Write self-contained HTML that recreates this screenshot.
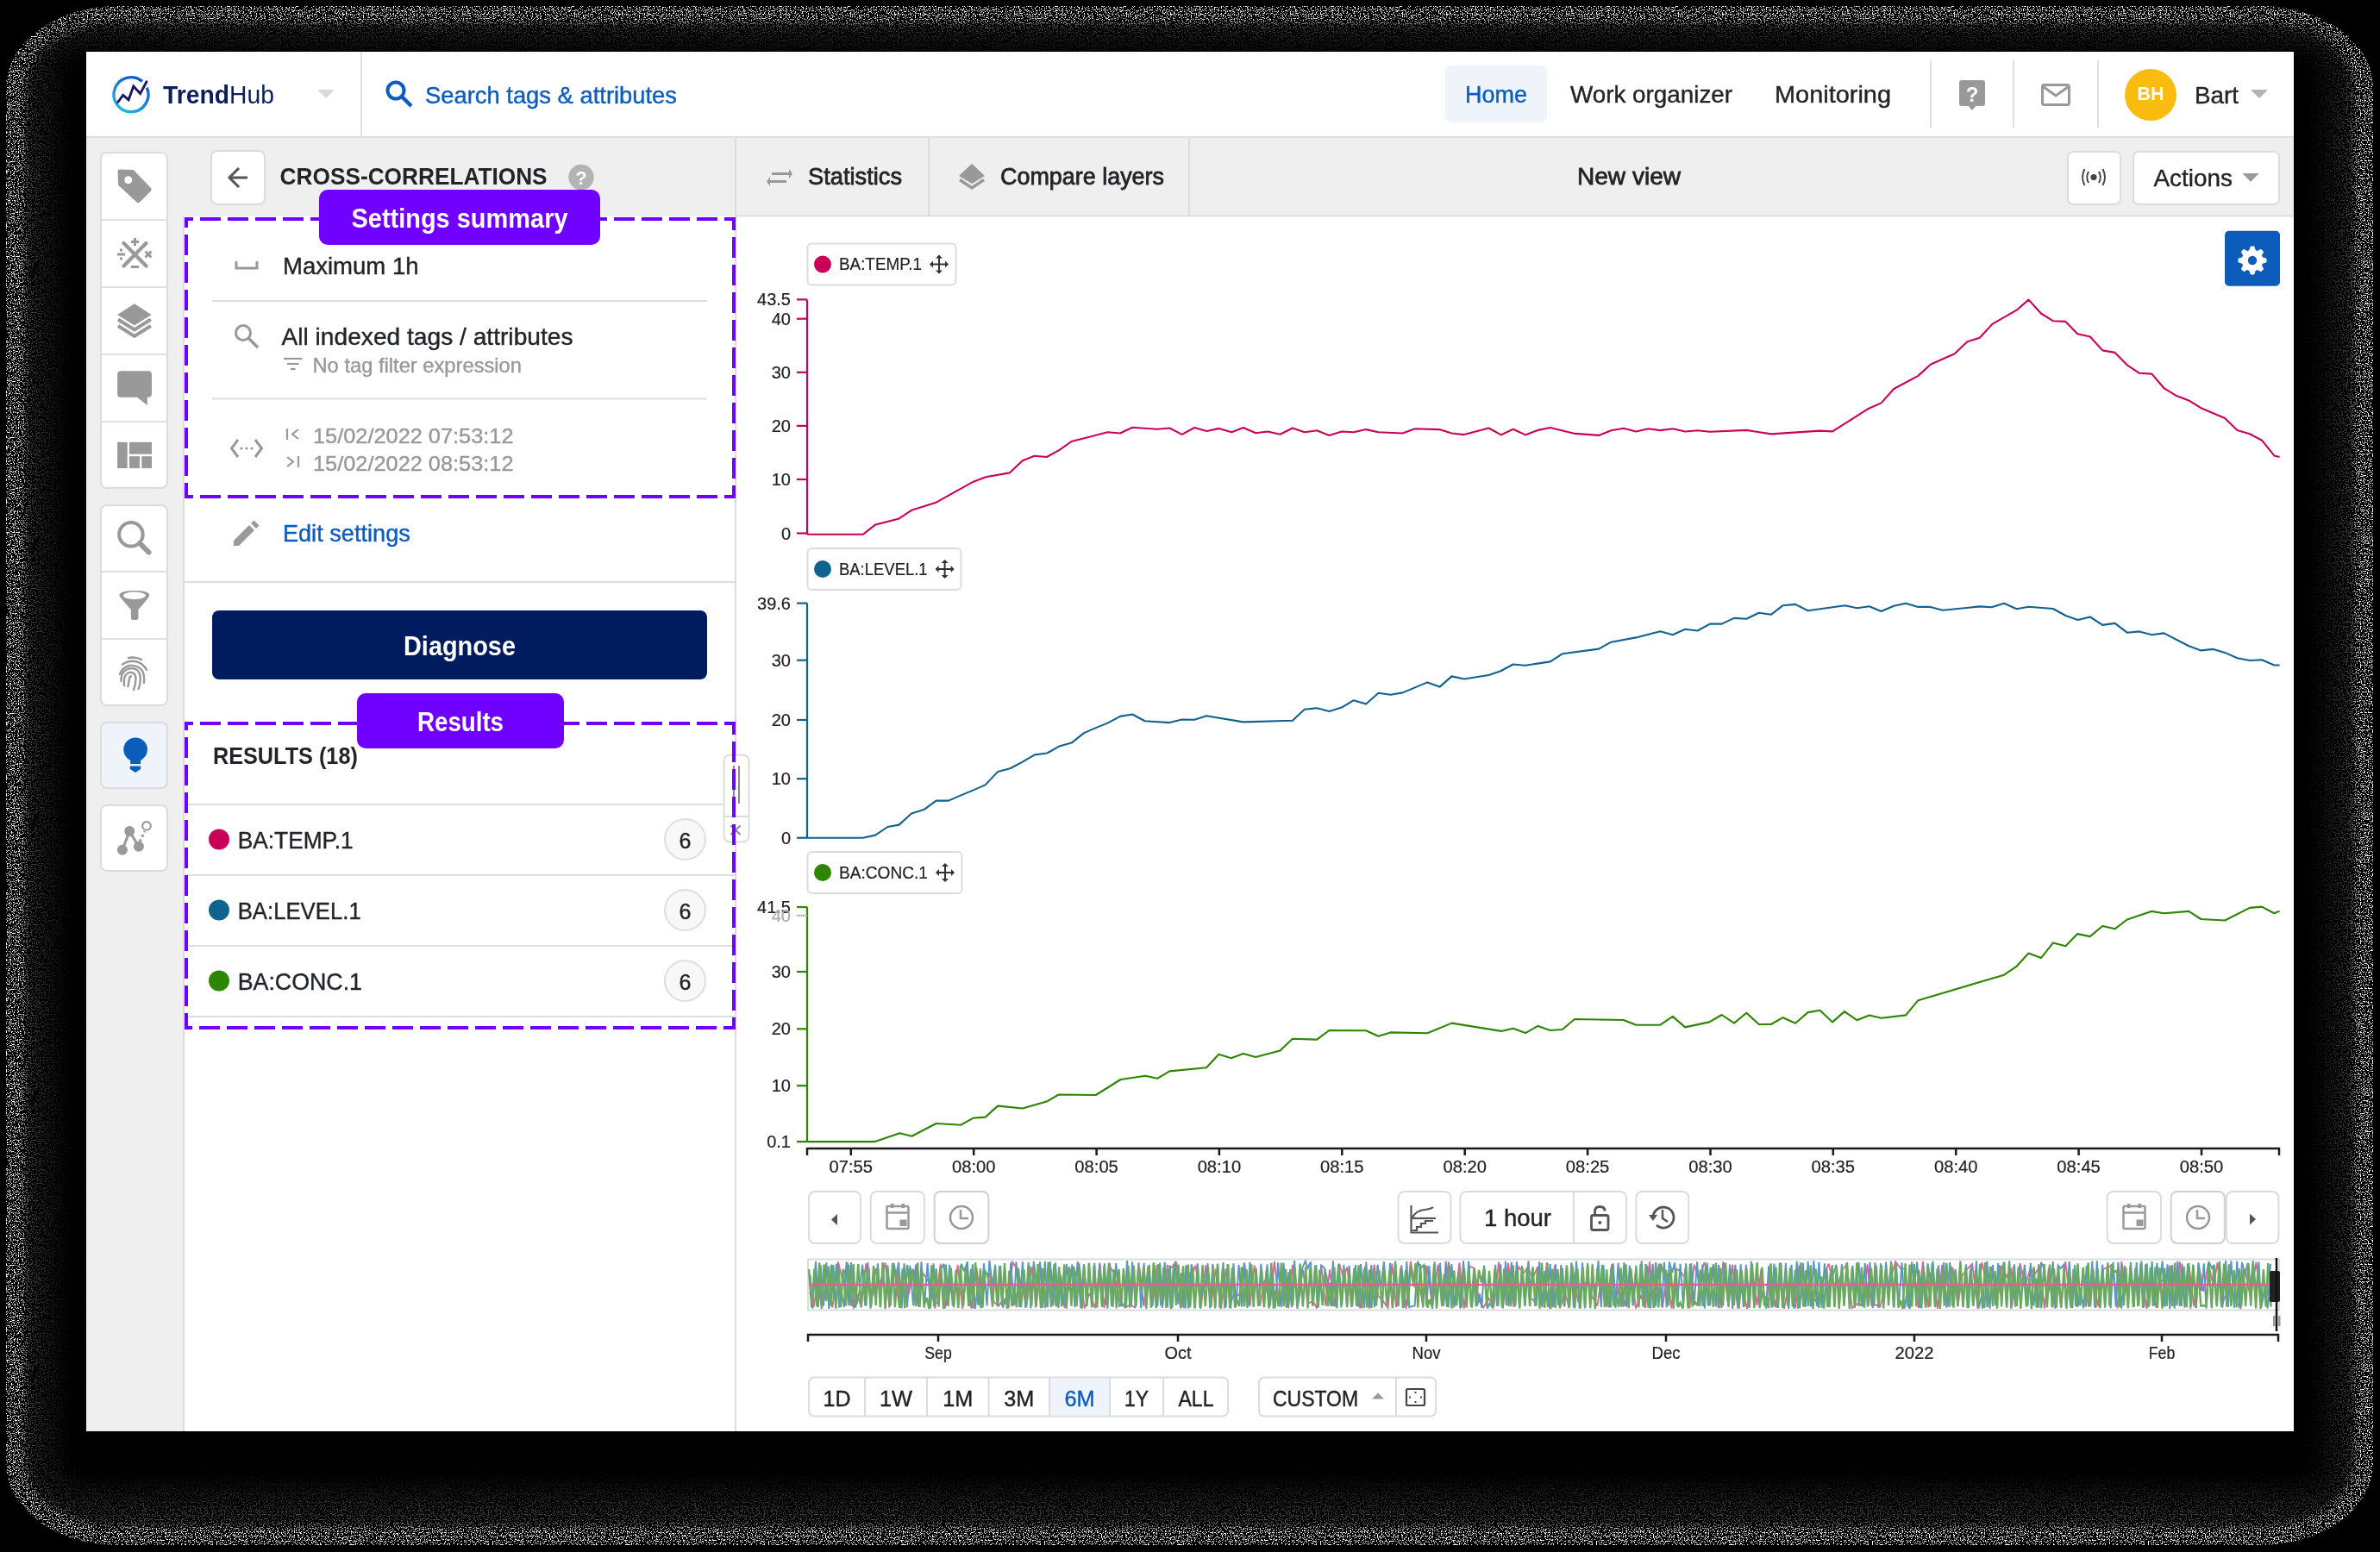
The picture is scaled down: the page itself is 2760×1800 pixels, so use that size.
<!DOCTYPE html>
<html><head><meta charset="utf-8"><title>TrendHub</title>
<style>
html,body{margin:0;padding:0;background:#000;width:2760px;height:1800px;overflow:hidden;}
svg{display:block;font-family:"Liberation Sans", sans-serif;will-change:transform;}
</style></head><body>
<svg width="2760" height="1800" viewBox="0 0 2760 1800">
<rect x="0" y="0" width="2760" height="1800" fill="#000"/>
<defs><filter id="dither" x="0" y="0" width="2760" height="1800" filterUnits="userSpaceOnUse" color-interpolation-filters="sRGB"><feTurbulence type="fractalNoise" baseFrequency="0.8" numOctaves="1" seed="11" result="t"/><feColorMatrix in="t" type="matrix" values="0 0 0 0 0  0 0 0 0 0  0 0 0 0 0  16 0 0 0 -8.8" result="m"/><feComponentTransfer in="SourceGraphic" result="b"><feFuncR type="linear" slope="2.8"/><feFuncG type="linear" slope="2.8"/><feFuncB type="linear" slope="2.8"/></feComponentTransfer><feComposite in="b" in2="m" operator="in" result="c"/><feFlood flood-color="#000" result="k"/><feComposite in="c" in2="k" operator="over"/></filter><filter id="sblur" x="-10%" y="-10%" width="120%" height="120%"><feGaussianBlur stdDeviation="22"/></filter><filter id="sblur2" x="-10%" y="-10%" width="120%" height="120%"><feGaussianBlur stdDeviation="5"/></filter></defs>
<g filter="url(#dither)">
<rect x="0" y="0" width="2760" height="1800" fill="#000"/>
<rect x="7" y="7" width="2745" height="1785" rx="130" ry="95" fill="#6e6e6e"/>
<rect x="28" y="27" width="2703" height="1745" rx="112" ry="78" fill="#202020" filter="url(#sblur2)"/>
<rect x="50" y="40" width="2660" height="1700" rx="20" fill="#000" filter="url(#sblur)"/>
</g>
<rect x="100" y="60" width="2560" height="1600" fill="#efefef"/>
<rect x="100" y="60" width="2560" height="98" fill="#ffffff"/>
<rect x="100" y="158" width="2560" height="2" fill="#dedede"/>
<rect x="418" y="60" width="2" height="98" fill="#e2e2e2"/>
<defs><linearGradient id="logoG" x1="0.8" y1="0" x2="0.2" y2="1"><stop offset="0" stop-color="#0a55c0"/><stop offset="1" stop-color="#27b6e6"/></linearGradient></defs>
<path d="M170.3,101.6 A20,20 0 1 1 164.9,94.4" fill="none" stroke="url(#logoG)" stroke-width="3.4"/>
<polyline points="136.7,118.5 142.7,110.4 149.1,115.7 154.8,100.1 162.6,108.6 170,94.8" fill="none" stroke="#1c1a5e" stroke-width="2.9" stroke-linejoin="miter" stroke-linecap="round"/>
<text x="189" y="120" font-size="29" font-weight="normal" fill="#0b1f5e" text-anchor="start" textLength="129" lengthAdjust="spacingAndGlyphs" ><tspan font-weight="bold">Trend</tspan>Hub</text>
<polygon points="368,104 388,104 378,114" fill="#d9d9d9"/>
<circle cx="459" cy="105" r="9.5" fill="none" stroke="#0c5cc0" stroke-width="4"/>
<line x1="466" y1="112" x2="477" y2="123" stroke="#0c5cc0" stroke-width="4.5" stroke-linecap="butt"/>
<text x="493" y="119.7" font-size="28" font-weight="normal" fill="#0c5cc0" text-anchor="start" textLength="292" lengthAdjust="spacingAndGlyphs"  stroke="#0c5cc0" stroke-width="0.4">Search tags &amp; attributes</text>
<rect x="1676" y="76" width="118" height="66" rx="8" fill="#eef4fa"/>
<text x="1699" y="118.5" font-size="28" font-weight="normal" fill="#0c5cc0" text-anchor="start" textLength="72" lengthAdjust="spacingAndGlyphs"  stroke="#0c5cc0" stroke-width="0.4">Home</text>
<text x="1821" y="118.5" font-size="28" font-weight="normal" fill="#212529" text-anchor="start" textLength="188" lengthAdjust="spacingAndGlyphs"  stroke="#212529" stroke-width="0.4">Work organizer</text>
<text x="2058" y="118.5" font-size="28" font-weight="normal" fill="#212529" text-anchor="start" textLength="135" lengthAdjust="spacingAndGlyphs"  stroke="#212529" stroke-width="0.4">Monitoring</text>
<rect x="2238" y="70" width="2" height="78" fill="#dedede"/>
<rect x="2334" y="70" width="2" height="78" fill="#dedede"/>
<rect x="2432" y="70" width="2" height="78" fill="#dedede"/>
<rect x="2272" y="93" width="30" height="30" rx="3" fill="#999"/>
<polygon points="2282,122 2292,122 2287,128" fill="#999"/>
<text x="2287" y="118" font-size="24" font-weight="bold" fill="#fff" text-anchor="middle">?</text>
<rect x="2368.5" y="98.5" width="31" height="23" rx="2" fill="none" stroke="#999" stroke-width="3"/>
<polyline points="2370,101 2384,111 2398,101" fill="none" stroke="#999" stroke-width="3"/>
<circle cx="2494" cy="110" r="30" fill="#fbbc10"/>
<text x="2494" y="115.6" font-size="22" font-weight="bold" fill="#fff" text-anchor="middle" textLength="31" lengthAdjust="spacingAndGlyphs" >BH</text>
<text x="2545" y="119.6" font-size="28" font-weight="normal" fill="#212529" text-anchor="start" textLength="51" lengthAdjust="spacingAndGlyphs"  stroke="#212529" stroke-width="0.4">Bart</text>
<polygon points="2610,104 2630,104 2620,114" fill="#b3b3b3"/>
<rect x="117" y="177" width="77" height="389" rx="7" fill="#fff" stroke="#dcdcdc" stroke-width="2"/>
<rect x="118" y="254" width="75" height="2" fill="#e0e0e0"/>
<rect x="118" y="332" width="75" height="2" fill="#e0e0e0"/>
<rect x="118" y="410" width="75" height="2" fill="#e0e0e0"/>
<rect x="118" y="488" width="75" height="2" fill="#e0e0e0"/>
<rect x="117" y="586" width="77" height="232" rx="7" fill="#fff" stroke="#dcdcdc" stroke-width="2"/>
<rect x="118" y="662" width="75" height="2" fill="#e0e0e0"/>
<rect x="118" y="740" width="75" height="2" fill="#e0e0e0"/>
<rect x="117" y="838" width="77" height="76" rx="7" fill="#eef4fa" stroke="#dcdcdc" stroke-width="2"/>
<rect x="117" y="934" width="77" height="76" rx="7" fill="#fff" stroke="#dcdcdc" stroke-width="2"/>
<path d="M136.6,199 Q136.5,196.6 139,196.6 L154.7,197.1 L175,218 Q176.5,219.8 175,221.5 L162,234.5 Q160.3,236 158.6,234.5 L137.1,214.7 Z" fill="#999999"/>
<circle cx="148.8" cy="208.8" r="4.5" fill="#fff"/>
<g stroke="#999999" stroke-width="4.2" stroke-linecap="round"><line x1="143.5" y1="282" x2="169.5" y2="308.5"/><line x1="169.5" y1="282" x2="143.5" y2="308.5"/></g>
<g stroke="#999999" stroke-width="3" fill="#999999"><line x1="152" y1="280.5" x2="161" y2="280.5"/><line x1="156.5" y1="276" x2="156.5" y2="285"/><line x1="152" y1="309.5" x2="161" y2="309.5"/><line x1="136" y1="295" x2="145" y2="295"/><line x1="168.5" y1="291.5" x2="175.5" y2="298.5"/><line x1="175.5" y1="291.5" x2="168.5" y2="298.5"/></g>
<circle cx="140.5" cy="290" r="1.8" fill="#999999"/><circle cx="140.5" cy="300" r="1.8" fill="#999999"/>
<polygon points="155.9,352.3 175.6,365 155.9,377.6 136.1,365" fill="#999999"/>
<polyline points="137,370.5 155.9,382.5 174.8,370.5" fill="none" stroke="#999999" stroke-width="4"/>
<polyline points="137,378 155.9,390 174.8,378" fill="none" stroke="#999999" stroke-width="4"/>
<rect x="136.1" y="430.2" width="39.9" height="30.5" rx="4" fill="#999999"/><polygon points="157.8,460 170.9,470 170.9,460" fill="#999999"/>
<rect x="136.1" y="512.8" width="11.6" height="30.3" fill="#999999"/><rect x="150" y="512.8" width="26" height="13.9" fill="#999999"/><rect x="150" y="529.2" width="12" height="13.9" fill="#999999"/><rect x="164.3" y="529.2" width="11.7" height="13.9" fill="#999999"/>
<circle cx="151.9" cy="619.8" r="13.8" fill="none" stroke="#999999" stroke-width="4"/><line x1="162" y1="630" x2="172.5" y2="640.5" stroke="#999999" stroke-width="6" stroke-linecap="round"/>
<path d="M138.4,690.7 Q138.4,685 155.9,685 Q173.4,685 173.4,690.7 Q172,694 160.4,707 L160.4,717 Q160.4,719 156,719 Q151.9,719 151.9,717 L151.9,707 Q140,694 138.4,690.7 Z" fill="#999999"/>
<ellipse cx="155.9" cy="690.7" rx="13" ry="4.2" fill="#fff"/>
<g fill="none" stroke="#999999" stroke-width="2.4" stroke-linecap="round"><path d="M148.5,796 Q149.5,790 150,787 Q150.5,784 152,784.5"/><path d="M144,795 Q143.5,788 145,784 Q148,779 153,780 Q158,781.5 157.5,788 Q157,795 155,800"/><path d="M140.5,790 Q140,781 146,777 Q153,773 159,777 Q164,782 162.5,791 Q162,796 160.5,799"/><path d="M139,782 Q142,774 150,772 Q160,771 165,778 Q168,784 167,792"/><path d="M142,770.5 Q149,766 157,767 Q166,769 170,777"/><path d="M149,763 Q157,761.5 164,765"/></g>
<circle cx="157.1" cy="869.3" r="13.8" fill="#0c5cbc"/><path d="M147,877 L151.2,882 L151.2,886 L163.1,886 L163.1,882 L167.3,877 Z" fill="#0c5cbc"/><path d="M150.8,888.5 L163.1,888.5 L163.1,892 L157,896 L150.8,892 Z" fill="#0c5cbc"/>
<g stroke="#999999" stroke-width="3"><line x1="150.2" y1="964.1" x2="141.9" y2="985.8"/><line x1="150.2" y1="964.1" x2="160.9" y2="981.7"/><line x1="162" y1="976" x2="168" y2="964" stroke-dasharray="3 3"/></g>
<circle cx="150.2" cy="964.1" r="6" fill="#999999"/><circle cx="141.9" cy="985.8" r="6" fill="#999999"/><circle cx="160.9" cy="981.7" r="6" fill="#999999"/><circle cx="170" cy="957.9" r="4.8" fill="none" stroke="#999999" stroke-width="2.2"/>
<rect x="213" y="251" width="640" height="1409" fill="#ffffff"/>
<rect x="212" y="250" width="2" height="1410" fill="#dcdcdc"/>
<rect x="852" y="160" width="2" height="1500" fill="#dcdcdc"/>
<rect x="245" y="175" width="62" height="62" rx="7" fill="#fff" stroke="#dcdcdc" stroke-width="2"/>
<g stroke="#555" stroke-width="3" fill="none"><line x1="266" y1="206" x2="287" y2="206"/><polyline points="277,195 266,206 277,217"/></g>
<text x="324.6" y="213.8" font-size="28" font-weight="bold" fill="#212529" text-anchor="start" textLength="310" lengthAdjust="spacingAndGlyphs" >CROSS-CORRELATIONS</text>
<circle cx="674" cy="205.5" r="14.7" fill="#b3b3b3"/>
<text x="674" y="214" font-size="22" font-weight="bold" fill="#fff" text-anchor="middle">?</text>
<g stroke="#999" stroke-width="3" fill="none"><polyline points="274,303 274,311 298,311 298,303"/></g>
<text x="328" y="317.8" font-size="28" font-weight="normal" fill="#212529" text-anchor="start" textLength="157.5" lengthAdjust="spacingAndGlyphs"  stroke="#212529" stroke-width="0.4">Maximum 1h</text>
<rect x="246" y="348" width="574" height="2" fill="#dedede"/>
<circle cx="282" cy="386" r="8.5" fill="none" stroke="#999" stroke-width="3"/><line x1="288" y1="392" x2="299" y2="403" stroke="#999" stroke-width="3.5"/>
<text x="326.5" y="399.6" font-size="28" font-weight="normal" fill="#212529" text-anchor="start" textLength="338" lengthAdjust="spacingAndGlyphs"  stroke="#212529" stroke-width="0.4">All indexed tags / attributes</text>
<g stroke="#999" stroke-width="2.2"><line x1="329" y1="416" x2="350.5" y2="416"/><line x1="333" y1="422" x2="346.5" y2="422"/><line x1="337" y1="428" x2="342.5" y2="428"/></g>
<text x="362.5" y="432" font-size="24" font-weight="normal" fill="#999" text-anchor="start" textLength="242.5" lengthAdjust="spacingAndGlyphs"  stroke="#999" stroke-width="0.4">No tag filter expression</text>
<rect x="246" y="461.5" width="574" height="2" fill="#dedede"/>
<g stroke="#999" stroke-width="3" fill="none"><polyline points="276,510 268.5,520 276,530"/><polyline points="296,510 303.5,520 296,530"/></g>
<g fill="#999"><circle cx="280" cy="520" r="1.6"/><circle cx="286" cy="520" r="1.6"/><circle cx="292" cy="520" r="1.6"/></g>
<g stroke="#999" stroke-width="2.2" fill="none"><line x1="333" y1="497" x2="333" y2="510"/><polyline points="346,498 339,503.5 346,509"/><line x1="346" y1="529" x2="346" y2="542"/><polyline points="333,530 340,535.5 333,541"/></g>
<text x="363" y="514" font-size="24" font-weight="normal" fill="#999" text-anchor="start" textLength="232.5" lengthAdjust="spacingAndGlyphs"  stroke="#999" stroke-width="0.4">15/02/2022 07:53:12</text>
<text x="363" y="546" font-size="24" font-weight="normal" fill="#999" text-anchor="start" textLength="232.5" lengthAdjust="spacingAndGlyphs"  stroke="#999" stroke-width="0.4">15/02/2022 08:53:12</text>
<path d="M271,627 L271,633 L277,633 L295,615 L289,609 Z" fill="#999"/><path d="M291,607 L294.5,603.5 L300.5,609.5 L297,613 Z" fill="#999"/>
<text x="327.9" y="628.2" font-size="28" font-weight="normal" fill="#0c5cc0" text-anchor="start" textLength="148" lengthAdjust="spacingAndGlyphs"  stroke="#0c5cc0" stroke-width="0.4">Edit settings</text>
<rect x="213" y="674" width="640" height="2" fill="#dedede"/>
<rect x="246" y="708" width="574" height="80" rx="8" fill="#001c5e"/>
<text x="533" y="760" font-size="32" font-weight="bold" fill="#fff" text-anchor="middle" textLength="130" lengthAdjust="spacingAndGlyphs" >Diagnose</text>
<text x="246.9" y="885.7" font-size="28" font-weight="bold" fill="#212529" text-anchor="start" textLength="168" lengthAdjust="spacingAndGlyphs" >RESULTS (18)</text>
<rect x="218" y="932" width="620" height="2" fill="#dedede"/>
<circle cx="254" cy="973.5" r="12" fill="#c8005a"/>
<text x="275.7" y="984" font-size="28" font-weight="normal" fill="#212529" text-anchor="start" textLength="134" lengthAdjust="spacingAndGlyphs"  stroke="#212529" stroke-width="0.4">BA:TEMP.1</text>
<circle cx="794.5" cy="973.5" r="23.5" fill="#f8f8f8" stroke="#dedede" stroke-width="2"/>
<text x="794.5" y="984.0" font-size="25" font-weight="normal" fill="#212529" text-anchor="middle"  stroke="#212529" stroke-width="0.4">6</text>
<circle cx="254" cy="1055.5" r="12" fill="#12628f"/>
<text x="275.7" y="1065.7" font-size="28" font-weight="normal" fill="#212529" text-anchor="start" textLength="143" lengthAdjust="spacingAndGlyphs"  stroke="#212529" stroke-width="0.4">BA:LEVEL.1</text>
<circle cx="794.5" cy="1055.5" r="23.5" fill="#f8f8f8" stroke="#dedede" stroke-width="2"/>
<text x="794.5" y="1066.0" font-size="25" font-weight="normal" fill="#212529" text-anchor="middle"  stroke="#212529" stroke-width="0.4">6</text>
<circle cx="254" cy="1137.5" r="12" fill="#2d8500"/>
<text x="275.7" y="1147.8" font-size="28" font-weight="normal" fill="#212529" text-anchor="start" textLength="144.3" lengthAdjust="spacingAndGlyphs"  stroke="#212529" stroke-width="0.4">BA:CONC.1</text>
<circle cx="794.5" cy="1137.5" r="23.5" fill="#f8f8f8" stroke="#dedede" stroke-width="2"/>
<text x="794.5" y="1148.0" font-size="25" font-weight="normal" fill="#212529" text-anchor="middle"  stroke="#212529" stroke-width="0.4">6</text>
<rect x="213" y="1014" width="640" height="2" fill="#dedede"/>
<rect x="213" y="1096" width="640" height="2" fill="#dedede"/>
<rect x="213" y="1178" width="640" height="2" fill="#dedede"/>
<rect x="854" y="249.5" width="1806" height="2" fill="#dcdcdc"/>
<rect x="854" y="251.5" width="1806" height="1408.5" fill="#fff"/>
<rect x="1076" y="160" width="2" height="90" fill="#dcdcdc"/>
<rect x="1378" y="160" width="2" height="90" fill="#dcdcdc"/>
<g fill="#999"><path d="M895,200 L915,200 L915,196 L919,201.5 L915,207 L915,203 L895,203 Z"/><path d="M912,209 L893,209 L893,205 L889,210.5 L893,216 L893,212 L912,212 Z"/></g>
<text x="937" y="213.7" font-size="28" font-weight="normal" fill="#212529" text-anchor="start" textLength="109" lengthAdjust="spacingAndGlyphs"  stroke="#212529" stroke-width="0.8">Statistics</text>
<polygon points="1127,189.7 1142,204 1127,213 1112,204" fill="#999"/><polyline points="1113,208.5 1127,218 1141,208.5" fill="none" stroke="#999" stroke-width="3.5"/>
<text x="1160" y="213.7" font-size="28" font-weight="normal" fill="#212529" text-anchor="start" textLength="190" lengthAdjust="spacingAndGlyphs"  stroke="#212529" stroke-width="0.8">Compare layers</text>
<text x="1829" y="214" font-size="28" font-weight="normal" fill="#212529" text-anchor="start" textLength="120" lengthAdjust="spacingAndGlyphs"  stroke="#212529" stroke-width="0.8">New view</text>
<rect x="2398" y="176" width="61" height="61" rx="6" fill="#fff" stroke="#dcdcdc" stroke-width="2"/>
<circle cx="2428" cy="205.5" r="3.6" fill="#444"/><g fill="none" stroke="#444" stroke-width="2"><path d="M2422,199 Q2418.5,205.5 2422,212"/><path d="M2434,199 Q2437.5,205.5 2434,212"/><path d="M2417.5,196 Q2412.5,205.5 2417.5,215"/><path d="M2438.5,196 Q2443.5,205.5 2438.5,215"/></g>
<rect x="2474" y="176" width="169" height="61" rx="6" fill="#fff" stroke="#dcdcdc" stroke-width="2"/>
<text x="2497.5" y="216" font-size="28" font-weight="normal" fill="#212529" text-anchor="start" textLength="91.5" lengthAdjust="spacingAndGlyphs"  stroke="#212529" stroke-width="0.4">Actions</text>
<polygon points="2600.5,201 2619.7,201 2610,211" fill="#999"/>
<rect x="2580" y="267.7" width="64" height="64" rx="5" fill="#0c5cbc"/>
<polygon points="2623.28,298.55 2628.09,300.08 2628.09,303.92 2623.28,305.45 2622.42,307.54 2624.73,312.01 2622.01,314.73 2617.54,312.42 2615.45,313.28 2613.92,318.09 2610.08,318.09 2608.55,313.28 2606.46,312.42 2601.99,314.73 2599.27,312.01 2601.58,307.54 2600.72,305.45 2595.91,303.92 2595.91,300.08 2600.72,298.55 2601.58,296.46 2599.27,291.99 2601.99,289.27 2606.46,291.58 2608.55,290.72 2610.08,285.91 2613.92,285.91 2615.45,290.72 2617.54,291.58 2622.01,289.27 2624.73,291.99 2622.42,296.46" fill="#fff" stroke="#fff" stroke-width="0.8" stroke-linejoin="round"/>
<circle cx="2612" cy="302" r="12.2" fill="#fff"/><circle cx="2612" cy="302" r="5.2" fill="#0c5cbc"/>
<rect x="839.5" y="875.5" width="29" height="101" rx="7" fill="#fff" stroke="#dcdcdc" stroke-width="2"/>
<rect x="840" y="946" width="28" height="2" fill="#dcdcdc"/>
<g stroke="#888" stroke-width="2"><line x1="851" y1="888" x2="851" y2="932"/><line x1="857" y1="888" x2="857" y2="932"/><line x1="847.5" y1="957.5" x2="858.5" y2="968"/><line x1="858.5" y1="957.5" x2="847.5" y2="968"/></g>
<rect x="216" y="254" width="635" height="322" fill="none" stroke="#7000ff" stroke-width="4" stroke-dasharray="24 8" stroke-dashoffset="-16"/>
<rect x="216" y="839" width="635" height="353" fill="none" stroke="#7000ff" stroke-width="4" stroke-dasharray="24 8" stroke-dashoffset="-16"/>
<rect x="370" y="220" width="326" height="64" rx="10" fill="#7000ff"/>
<text x="533" y="264.2" font-size="32" font-weight="bold" fill="#fff" text-anchor="middle" textLength="251" lengthAdjust="spacingAndGlyphs" >Settings summary</text>
<rect x="414" y="804" width="240" height="64" rx="10" fill="#7000ff"/>
<text x="534" y="847.7" font-size="32" font-weight="bold" fill="#fff" text-anchor="middle" textLength="100" lengthAdjust="spacingAndGlyphs" >Results</text>
<rect x="936.5" y="282.5" width="172" height="48" rx="5" fill="#fff" stroke="#dcdcdc" stroke-width="2"/>
<circle cx="954" cy="306.5" r="10" fill="#c8005a"/>
<text x="973" y="313.3" font-size="20" font-weight="normal" fill="#222" text-anchor="start" textLength="96" lengthAdjust="spacingAndGlyphs"  stroke="#222" stroke-width="0.2">BA:TEMP.1</text>
<g stroke="#333" stroke-width="2"><line x1="1079" y1="306.5" x2="1099" y2="306.5"/><line x1="1089" y1="296.5" x2="1089" y2="316.5"/></g>
<g fill="#333"><polygon points="1078,306.5 1082,302.5 1082,310.5"/><polygon points="1100,306.5 1096,302.5 1096,310.5"/><polygon points="1089,295.5 1085,299.5 1093,299.5"/><polygon points="1089,317.5 1085,313.5 1093,313.5"/></g>
<line x1="936" y1="347.4" x2="936" y2="619.8" stroke="#c8005a" stroke-width="2.2"/>
<line x1="924" y1="347.4" x2="936" y2="347.4" stroke="#c8005a" stroke-width="2.2"/>
<text x="917" y="354.4" font-size="20" font-weight="normal" fill="#222" text-anchor="end"  stroke="#222" stroke-width="0.2">43.5</text>
<line x1="924" y1="369.7" x2="936" y2="369.7" stroke="#c8005a" stroke-width="2.2"/>
<text x="917" y="376.7" font-size="20" font-weight="normal" fill="#222" text-anchor="end"  stroke="#222" stroke-width="0.2">40</text>
<line x1="924" y1="431.8" x2="936" y2="431.8" stroke="#c8005a" stroke-width="2.2"/>
<text x="917" y="438.8" font-size="20" font-weight="normal" fill="#222" text-anchor="end"  stroke="#222" stroke-width="0.2">30</text>
<line x1="924" y1="493.9" x2="936" y2="493.9" stroke="#c8005a" stroke-width="2.2"/>
<text x="917" y="500.9" font-size="20" font-weight="normal" fill="#222" text-anchor="end"  stroke="#222" stroke-width="0.2">20</text>
<line x1="924" y1="556" x2="936" y2="556" stroke="#c8005a" stroke-width="2.2"/>
<text x="917" y="563" font-size="20" font-weight="normal" fill="#222" text-anchor="end"  stroke="#222" stroke-width="0.2">10</text>
<line x1="924" y1="618.5" x2="936" y2="618.5" stroke="#c8005a" stroke-width="2.2"/>
<text x="917" y="625.5" font-size="20" font-weight="normal" fill="#222" text-anchor="end"  stroke="#222" stroke-width="0.2">0</text>
<polyline points="936.0,619.8 1000.7,619.8 1015.0,608.6 1042.6,601.4 1057.0,591.8 1085.7,582.7 1128.8,558.7 1143.2,553.2 1170.7,548.4 1185.8,534.3 1199.5,528.8 1213.8,530.0 1228.2,522.1 1242.6,512.0 1284.5,501.3 1298.9,502.5 1313.2,495.7 1342.0,497.7 1356.3,496.5 1370.7,503.9 1385.1,496.0 1399.5,500.0 1413.8,496.9 1428.2,501.3 1441.8,496.0 1456.2,502.2 1470.1,500.5 1484.5,503.7 1498.9,496.5 1512.8,501.3 1527.1,499.3 1541.5,504.9 1555.9,500.5 1569.8,501.3 1584.1,498.1 1598.5,501.3 1626.5,502.5 1640.9,497.2 1669.2,498.1 1683.5,502.5 1697.9,504.1 1726.4,496.5 1740.8,504.4 1754.7,497.7 1769.0,504.4 1783.4,498.9 1797.8,496.0 1826.5,502.9 1854.0,504.9 1868.4,499.3 1882.8,496.7 1897.2,500.5 1911.6,497.2 1925.4,499.1 1939.8,497.2 1954.2,500.5 1968.6,499.3 1982.9,500.8 2025.3,498.9 2053.8,503.4 2110.5,499.6 2125.1,500.4 2167.2,473.7 2181.6,467.4 2196.2,451.0 2224.4,435.9 2239.1,422.5 2266.8,410.2 2281.4,396.3 2295.8,391.8 2310.4,375.9 2338.6,359.7 2352.5,347.6 2366.9,363.5 2381.0,372.3 2395.4,372.9 2409.2,387.2 2423.8,390.5 2438.2,406.4 2452.6,408.9 2466.7,423.3 2481.0,432.8 2495.4,433.6 2509.5,450.2 2523.9,459.1 2538.3,464.4 2552.4,473.2 2580.1,485.0 2594.5,498.9 2608.9,503.2 2623.0,510.7 2637.3,528.4 2643.6,529.9" fill="none" stroke="#c8005a" stroke-width="2.1" stroke-linejoin="round"/>
<rect x="936.5" y="636.0" width="178" height="48" rx="5" fill="#fff" stroke="#dcdcdc" stroke-width="2"/>
<circle cx="954" cy="660.0" r="10" fill="#12628f"/>
<text x="973" y="666.8" font-size="20" font-weight="normal" fill="#222" text-anchor="start" textLength="102.6" lengthAdjust="spacingAndGlyphs"  stroke="#222" stroke-width="0.2">BA:LEVEL.1</text>
<g stroke="#333" stroke-width="2"><line x1="1085.6" y1="660.0" x2="1105.6" y2="660.0"/><line x1="1095.6" y1="650.0" x2="1095.6" y2="670.0"/></g>
<g fill="#333"><polygon points="1084.6,660.0 1088.6,656.0 1088.6,664.0"/><polygon points="1106.6,660.0 1102.6,656.0 1102.6,664.0"/><polygon points="1095.6,649.0 1091.6,653.0 1099.6,653.0"/><polygon points="1095.6,671.0 1091.6,667.0 1099.6,667.0"/></g>
<line x1="936" y1="699.6" x2="936" y2="971.7" stroke="#12628f" stroke-width="2.2"/>
<line x1="924" y1="699.6" x2="936" y2="699.6" stroke="#12628f" stroke-width="2.2"/>
<text x="917" y="706.6" font-size="20" font-weight="normal" fill="#222" text-anchor="end"  stroke="#222" stroke-width="0.2">39.6</text>
<line x1="924" y1="765.7" x2="936" y2="765.7" stroke="#12628f" stroke-width="2.2"/>
<text x="917" y="772.7" font-size="20" font-weight="normal" fill="#222" text-anchor="end"  stroke="#222" stroke-width="0.2">30</text>
<line x1="924" y1="835" x2="936" y2="835" stroke="#12628f" stroke-width="2.2"/>
<text x="917" y="842" font-size="20" font-weight="normal" fill="#222" text-anchor="end"  stroke="#222" stroke-width="0.2">20</text>
<line x1="924" y1="903.2" x2="936" y2="903.2" stroke="#12628f" stroke-width="2.2"/>
<text x="917" y="910.2" font-size="20" font-weight="normal" fill="#222" text-anchor="end"  stroke="#222" stroke-width="0.2">10</text>
<line x1="924" y1="971.7" x2="936" y2="971.7" stroke="#12628f" stroke-width="2.2"/>
<text x="917" y="978.7" font-size="20" font-weight="normal" fill="#222" text-anchor="end"  stroke="#222" stroke-width="0.2">0</text>
<polyline points="936.0,971.7 1000.7,971.7 1015.0,968.6 1029.4,959.0 1042.6,956.6 1057.0,943.5 1072.0,938.7 1085.7,928.6 1100.0,928.6 1114.4,922.4 1128.8,916.4 1142.5,910.4 1157.1,895.1 1171.4,891.3 1185.8,883.6 1199.9,875.4 1214.3,873.5 1228.2,865.6 1242.6,861.6 1257.0,850.1 1270.8,844.1 1284.5,838.6 1298.9,830.9 1313.2,828.5 1327.6,836.2 1356.3,838.1 1370.7,834.5 1385.1,834.7 1399.0,830.2 1441.8,837.4 1498.9,835.7 1512.8,822.8 1527.1,821.3 1541.5,824.9 1555.9,820.6 1569.8,812.2 1584.1,816.5 1598.5,803.8 1612.6,805.7 1626.5,803.4 1655.3,791.4 1669.6,796.6 1683.5,784.4 1697.9,787.5 1726.4,783.0 1740.3,778.2 1754.7,770.5 1769.0,771.7 1797.8,767.4 1811.7,758.3 1854.0,752.6 1868.4,744.7 1897.2,739.4 1925.4,732.2 1939.8,736.3 1954.2,729.8 1968.6,731.5 1982.9,723.6 1996.6,723.6 2011.0,716.9 2025.3,717.8 2039.7,710.7 2053.8,712.8 2067.6,702.2 2082.0,700.9 2096.6,708.2 2139.5,702.2 2153.4,705.2 2167.7,703.2 2181.6,709.0 2196.2,702.7 2210.1,699.7 2224.4,703.9 2238.6,703.9 2252.9,707.7 2295.8,703.4 2309.6,704.2 2324.0,699.7 2338.6,706.2 2352.5,703.7 2381.0,706.0 2395.4,714.0 2409.7,719.0 2423.8,715.5 2438.2,724.9 2452.6,722.9 2466.7,733.7 2481.0,732.4 2495.4,736.2 2509.5,734.4 2538.3,749.3 2552.4,754.4 2566.8,752.9 2580.1,756.9 2594.5,763.2 2608.9,766.0 2623.0,765.2 2637.3,771.5 2643.6,771.5" fill="none" stroke="#12628f" stroke-width="2.1" stroke-linejoin="round"/>
<rect x="936.5" y="988.0" width="179" height="48" rx="5" fill="#fff" stroke="#dcdcdc" stroke-width="2"/>
<circle cx="954" cy="1012.0" r="10" fill="#2d8500"/>
<text x="973" y="1018.8" font-size="20" font-weight="normal" fill="#222" text-anchor="start" textLength="103" lengthAdjust="spacingAndGlyphs"  stroke="#222" stroke-width="0.2">BA:CONC.1</text>
<g stroke="#333" stroke-width="2"><line x1="1086" y1="1012.0" x2="1106" y2="1012.0"/><line x1="1096" y1="1002.0" x2="1096" y2="1022.0"/></g>
<g fill="#333"><polygon points="1085,1012.0 1089,1008.0 1089,1016.0"/><polygon points="1107,1012.0 1103,1008.0 1103,1016.0"/><polygon points="1096,1001.0 1092,1005.0 1100,1005.0"/><polygon points="1096,1023.0 1092,1019.0 1100,1019.0"/></g>
<line x1="936" y1="1052" x2="936" y2="1324.1" stroke="#2d8500" stroke-width="2.2"/>
<line x1="924" y1="1052" x2="936" y2="1052" stroke="#2d8500" stroke-width="2.2"/>
<text x="917" y="1059" font-size="20" font-weight="normal" fill="#222" text-anchor="end"  stroke="#222" stroke-width="0.2">41.5</text>
<line x1="924" y1="1127" x2="936" y2="1127" stroke="#2d8500" stroke-width="2.2"/>
<text x="917" y="1134" font-size="20" font-weight="normal" fill="#222" text-anchor="end"  stroke="#222" stroke-width="0.2">30</text>
<line x1="924" y1="1193.3" x2="936" y2="1193.3" stroke="#2d8500" stroke-width="2.2"/>
<text x="917" y="1200.3" font-size="20" font-weight="normal" fill="#222" text-anchor="end"  stroke="#222" stroke-width="0.2">20</text>
<line x1="924" y1="1259.2" x2="936" y2="1259.2" stroke="#2d8500" stroke-width="2.2"/>
<text x="917" y="1266.2" font-size="20" font-weight="normal" fill="#222" text-anchor="end"  stroke="#222" stroke-width="0.2">10</text>
<line x1="924" y1="1324.1" x2="936" y2="1324.1" stroke="#2d8500" stroke-width="2.2"/>
<text x="917" y="1331.1" font-size="20" font-weight="normal" fill="#222" text-anchor="end"  stroke="#222" stroke-width="0.2">0.1</text>
<line x1="924" y1="1061.8" x2="936" y2="1061.8" stroke="#a8d29a" stroke-width="2.2"/>
<text x="917" y="1068.8" font-size="20" font-weight="normal" fill="#aaa" text-anchor="end"  stroke="#aaa" stroke-width="0.2">40</text>
<polyline points="936.0,1324.1 1014.3,1324.1 1043.3,1314.2 1057.4,1317.8 1085.7,1303.0 1114.4,1304.7 1128.3,1296.8 1142.7,1295.6 1157.1,1282.6 1185.8,1285.5 1213.8,1277.6 1227.7,1269.5 1270.8,1270.0 1299.6,1252.0 1328.3,1247.7 1342.0,1250.8 1356.3,1242.4 1399.0,1238.3 1413.4,1222.8 1427.7,1227.3 1441.8,1222.0 1456.2,1225.9 1484.5,1218.4 1498.9,1204.8 1527.1,1205.7 1541.5,1195.0 1584.1,1195.2 1598.5,1201.7 1612.6,1197.4 1655.3,1198.3 1683.5,1186.6 1740.8,1195.9 1754.7,1192.8 1769.0,1198.1 1783.4,1189.9 1797.8,1195.0 1811.7,1194.0 1826.0,1182.0 1882.8,1183.0 1897.2,1188.7 1925.4,1188.7 1939.8,1178.9 1954.2,1191.4 1982.2,1185.4 1996.6,1177.0 2011.0,1186.6 2025.3,1174.8 2039.7,1188.0 2053.8,1188.0 2067.6,1180.2 2082.0,1186.7 2096.6,1174.1 2110.5,1171.8 2125.1,1185.4 2139.0,1173.1 2153.4,1183.2 2167.7,1177.6 2181.6,1180.7 2210.1,1177.4 2224.4,1160.2 2324.0,1130.7 2338.1,1121.2 2352.5,1105.5 2366.9,1111.1 2381.0,1093.4 2395.4,1097.2 2409.2,1083.1 2423.8,1086.1 2438.2,1074.0 2452.6,1077.3 2466.7,1066.5 2494.9,1056.9 2509.5,1059.2 2538.3,1056.9 2552.4,1066.0 2580.1,1067.5 2608.9,1052.9 2623.0,1051.6 2637.3,1059.2 2643.6,1056.6" fill="none" stroke="#2d8500" stroke-width="2.1" stroke-linejoin="round"/>
<line x1="936" y1="1332" x2="2644" y2="1332" stroke="#1a1a1a" stroke-width="2.5"/>
<line x1="936" y1="1331" x2="936" y2="1340" stroke="#1a1a1a" stroke-width="2.5"/><line x1="2643" y1="1331" x2="2643" y2="1340" stroke="#1a1a1a" stroke-width="2.5"/>
<line x1="986.8" y1="1331" x2="986.8" y2="1340" stroke="#1a1a1a" stroke-width="2.5"/>
<text x="986.8" y="1360" font-size="20" font-weight="normal" fill="#222" text-anchor="middle" textLength="50.5" lengthAdjust="spacingAndGlyphs"  stroke="#222" stroke-width="0.2">07:55</text>
<line x1="1129.2" y1="1331" x2="1129.2" y2="1340" stroke="#1a1a1a" stroke-width="2.5"/>
<text x="1129.2" y="1360" font-size="20" font-weight="normal" fill="#222" text-anchor="middle" textLength="50.5" lengthAdjust="spacingAndGlyphs"  stroke="#222" stroke-width="0.2">08:00</text>
<line x1="1271.6" y1="1331" x2="1271.6" y2="1340" stroke="#1a1a1a" stroke-width="2.5"/>
<text x="1271.6" y="1360" font-size="20" font-weight="normal" fill="#222" text-anchor="middle" textLength="50.5" lengthAdjust="spacingAndGlyphs"  stroke="#222" stroke-width="0.2">08:05</text>
<line x1="1413.9" y1="1331" x2="1413.9" y2="1340" stroke="#1a1a1a" stroke-width="2.5"/>
<text x="1413.9" y="1360" font-size="20" font-weight="normal" fill="#222" text-anchor="middle" textLength="50.5" lengthAdjust="spacingAndGlyphs"  stroke="#222" stroke-width="0.2">08:10</text>
<line x1="1556.3" y1="1331" x2="1556.3" y2="1340" stroke="#1a1a1a" stroke-width="2.5"/>
<text x="1556.3" y="1360" font-size="20" font-weight="normal" fill="#222" text-anchor="middle" textLength="50.5" lengthAdjust="spacingAndGlyphs"  stroke="#222" stroke-width="0.2">08:15</text>
<line x1="1698.7" y1="1331" x2="1698.7" y2="1340" stroke="#1a1a1a" stroke-width="2.5"/>
<text x="1698.7" y="1360" font-size="20" font-weight="normal" fill="#222" text-anchor="middle" textLength="50.5" lengthAdjust="spacingAndGlyphs"  stroke="#222" stroke-width="0.2">08:20</text>
<line x1="1841.1" y1="1331" x2="1841.1" y2="1340" stroke="#1a1a1a" stroke-width="2.5"/>
<text x="1841.1" y="1360" font-size="20" font-weight="normal" fill="#222" text-anchor="middle" textLength="50.5" lengthAdjust="spacingAndGlyphs"  stroke="#222" stroke-width="0.2">08:25</text>
<line x1="1983.5" y1="1331" x2="1983.5" y2="1340" stroke="#1a1a1a" stroke-width="2.5"/>
<text x="1983.5" y="1360" font-size="20" font-weight="normal" fill="#222" text-anchor="middle" textLength="50.5" lengthAdjust="spacingAndGlyphs"  stroke="#222" stroke-width="0.2">08:30</text>
<line x1="2125.8" y1="1331" x2="2125.8" y2="1340" stroke="#1a1a1a" stroke-width="2.5"/>
<text x="2125.8" y="1360" font-size="20" font-weight="normal" fill="#222" text-anchor="middle" textLength="50.5" lengthAdjust="spacingAndGlyphs"  stroke="#222" stroke-width="0.2">08:35</text>
<line x1="2268.2" y1="1331" x2="2268.2" y2="1340" stroke="#1a1a1a" stroke-width="2.5"/>
<text x="2268.2" y="1360" font-size="20" font-weight="normal" fill="#222" text-anchor="middle" textLength="50.5" lengthAdjust="spacingAndGlyphs"  stroke="#222" stroke-width="0.2">08:40</text>
<line x1="2410.6" y1="1331" x2="2410.6" y2="1340" stroke="#1a1a1a" stroke-width="2.5"/>
<text x="2410.6" y="1360" font-size="20" font-weight="normal" fill="#222" text-anchor="middle" textLength="50.5" lengthAdjust="spacingAndGlyphs"  stroke="#222" stroke-width="0.2">08:45</text>
<line x1="2553.0" y1="1331" x2="2553.0" y2="1340" stroke="#1a1a1a" stroke-width="2.5"/>
<text x="2553.0" y="1360" font-size="20" font-weight="normal" fill="#222" text-anchor="middle" textLength="50.5" lengthAdjust="spacingAndGlyphs"  stroke="#222" stroke-width="0.2">08:50</text>
<rect x="938" y="1382" width="60" height="60" rx="7" fill="#fff" stroke="#dcdcdc" stroke-width="2"/>
<rect x="1009.7" y="1382" width="62.299999999999955" height="60" rx="7" fill="#fff" stroke="#dcdcdc" stroke-width="2"/>
<rect x="1083.6" y="1382" width="62.80000000000018" height="60" rx="7" fill="#fff" stroke="#c9d1da" stroke-width="2"/>
<polygon points="964,1414.5 971,1408 971,1421" fill="#555"/>
<g fill="none" stroke="#999" stroke-width="2.5"><rect x="1028.5" y="1399" width="25" height="26" rx="1.5"/><line x1="1028.5" y1="1406.5" x2="1053.5" y2="1406.5"/></g>
<g fill="#999"><rect x="1033" y="1396" width="3.5" height="5"/><rect x="1045.5" y="1396" width="3.5" height="5"/><rect x="1043.5" y="1414.5" width="8" height="7.5"/></g>
<circle cx="1115" cy="1412" r="13" fill="none" stroke="#999" stroke-width="2.5"/><polyline points="1114,1403 1114,1413 1123,1413" fill="none" stroke="#999" stroke-width="2.5"/>
<rect x="1621.5" y="1382" width="61.0" height="60" rx="7" fill="#fff" stroke="#dcdcdc" stroke-width="2"/>
<g fill="none" stroke="#555" stroke-width="2.2"><polyline points="1636.5,1398 1636.5,1429.5 1668,1429.5"/><line x1="1636.5" y1="1413" x2="1665" y2="1413"/><path d="M1638,1412 Q1642,1404 1652,1403 Q1660,1402 1662,1400"/><polyline points="1638,1427 1643,1427 1643,1423 1648,1423 1648,1419 1653,1419 1653,1416 1662,1416"/></g>
<rect x="1693.4" y="1382" width="192.5999999999999" height="60" rx="7" fill="#fff" stroke="#dcdcdc" stroke-width="2"/>
<rect x="1824" y="1382" width="2" height="60" fill="#dcdcdc"/>
<text x="1721" y="1422.2" font-size="28" font-weight="normal" fill="#212529" text-anchor="start" textLength="78" lengthAdjust="spacingAndGlyphs"  stroke="#212529" stroke-width="0.4">1 hour</text>
<rect x="1845.5" y="1409.5" width="19.5" height="17" rx="2" fill="none" stroke="#555" stroke-width="2.8"/><path d="M1849.5,1409 L1849.5,1405 Q1849.5,1399.5 1855.3,1399.5 Q1861,1399.5 1861,1404.5" fill="none" stroke="#555" stroke-width="2.8"/><circle cx="1855.3" cy="1418" r="2" fill="#555"/>
<rect x="1897.3" y="1382" width="61.0" height="60" rx="7" fill="#fff" stroke="#dcdcdc" stroke-width="2"/>
<path d="M1917,1412 A12,12 0 1 1 1921,1421" fill="none" stroke="#555" stroke-width="2.8"/><polygon points="1912,1409 1922,1409 1917,1416" fill="#555"/><polyline points="1928,1403 1928,1413 1934,1417" fill="none" stroke="#555" stroke-width="2.5"/>
<rect x="2443.6" y="1382" width="62.40000000000009" height="60" rx="7" fill="#fff" stroke="#dcdcdc" stroke-width="2"/>
<rect x="2517.7" y="1382" width="62.100000000000364" height="60" rx="7" fill="#fff" stroke="#c9d1da" stroke-width="2"/>
<rect x="2581.8" y="1382" width="60.59999999999991" height="60" rx="7" fill="#fff" stroke="#dcdcdc" stroke-width="2"/>
<g fill="none" stroke="#999" stroke-width="2.5"><rect x="2462.5" y="1399" width="25" height="26" rx="1.5"/><line x1="2462.5" y1="1406.5" x2="2487.5" y2="1406.5"/></g>
<g fill="#999"><rect x="2467" y="1396" width="3.5" height="5"/><rect x="2479.5" y="1396" width="3.5" height="5"/><rect x="2477.5" y="1414.5" width="8" height="7.5"/></g>
<circle cx="2549" cy="1412" r="13" fill="none" stroke="#999" stroke-width="2.5"/><polyline points="2548,1403 2548,1413 2557,1413" fill="none" stroke="#999" stroke-width="2.5"/>
<polygon points="2609,1407.5 2616,1414 2609,1420.5" fill="#555"/>
<rect x="937" y="1460.5" width="1706" height="59" fill="#fff" stroke="#dcdcdc" stroke-width="2"/>
<polyline points="939.0,1499.3 943.6,1516.1 948.1,1489.5 952.6,1514.4 958.9,1498.2 965.3,1516.3 971.9,1463.4 976.9,1483.9 983.1,1464.6 988.9,1515.5 993.5,1500.6 998.8,1515.3 1004.2,1465.7 1010.1,1515.0 1015.7,1470.9 1020.7,1488.8 1026.8,1464.4 1031.3,1516.7 1036.9,1470.9 1042.9,1516.4 1048.3,1470.6 1053.7,1501.6 1059.5,1471.9 1064.6,1515.5 1069.0,1475.3 1073.6,1481.1 1078.8,1490.2 1084.4,1517.5 1090.7,1465.5 1095.9,1517.5 1100.6,1480.5 1106.1,1516.4 1110.5,1466.8 1116.2,1517.8 1121.7,1468.6 1126.2,1517.6 1132.5,1470.2 1137.8,1514.4 1142.4,1477.3 1147.5,1476.8 1152.1,1509.3 1157.9,1514.6 1163.0,1508.2 1169.6,1515.9 1174.2,1463.9 1179.2,1471.0 1185.7,1494.4 1190.2,1516.1 1196.4,1469.3 1201.7,1514.7 1207.2,1470.0 1212.1,1517.2 1218.4,1470.3 1224.4,1514.9 1229.6,1482.6 1234.6,1516.8 1240.0,1471.4 1246.5,1480.2 1251.3,1464.8 1257.7,1517.4 1263.5,1499.7 1269.9,1517.1 1275.4,1464.6 1280.5,1517.2 1285.8,1466.6 1291.8,1476.8 1298.2,1507.2 1304.7,1516.6 1310.3,1513.7 1316.1,1516.1 1321.5,1470.8 1326.4,1515.0 1331.3,1468.3 1336.6,1514.5 1341.8,1467.1 1348.2,1515.7 1353.7,1467.8 1358.1,1470.2 1364.3,1464.6 1370.3,1516.2 1375.8,1468.0 1380.5,1482.5 1386.6,1467.6 1392.6,1517.6 1398.4,1467.5 1404.3,1515.8 1409.7,1471.5 1416.1,1517.8 1421.7,1471.5 1426.4,1514.5 1431.0,1500.1 1437.1,1502.2 1442.9,1464.3 1449.5,1514.9 1454.7,1467.4 1461.0,1514.6 1466.5,1484.3 1472.5,1514.1 1477.9,1463.2 1483.6,1514.3 1489.8,1482.0 1494.3,1517.1 1499.0,1466.8 1505.2,1511.4 1510.8,1472.6 1516.7,1512.2 1522.5,1508.5 1527.1,1517.5 1532.2,1468.0 1537.2,1514.5 1542.1,1472.3 1547.0,1515.2 1553.0,1465.6 1557.8,1481.3 1562.3,1469.6 1567.1,1515.9 1571.7,1470.4 1577.2,1517.3 1582.7,1469.2 1587.9,1517.3 1593.7,1466.6 1598.2,1503.3 1603.2,1507.9 1609.5,1516.7 1614.4,1465.6 1619.1,1515.8 1625.7,1471.8 1630.6,1517.9 1635.8,1463.0 1641.2,1492.7 1645.6,1488.0 1650.1,1514.1 1655.0,1468.3 1661.1,1516.6 1667.4,1466.5 1674.0,1514.6 1679.8,1463.4 1686.2,1516.5 1692.4,1464.3 1697.9,1517.3 1704.1,1468.3 1710.0,1471.4 1714.7,1507.6 1720.3,1516.5 1726.2,1505.9 1732.3,1516.0 1738.1,1463.6 1743.1,1514.3 1749.1,1464.8 1755.6,1516.0 1761.1,1469.2 1766.8,1476.6 1771.8,1469.7 1777.4,1482.1 1783.3,1469.2 1788.4,1516.1 1793.8,1464.1 1798.6,1517.9 1803.1,1467.1 1809.6,1515.8 1814.4,1496.2 1819.2,1516.1 1823.8,1470.4 1830.2,1510.4 1835.7,1492.1 1841.1,1485.5 1846.2,1503.8 1852.4,1514.5 1858.4,1471.1 1863.6,1515.6 1869.3,1466.2 1874.3,1507.6 1879.3,1482.0 1884.8,1514.8 1891.3,1471.0 1897.1,1517.7 1902.7,1503.0 1908.1,1517.0 1913.2,1463.4 1917.8,1515.9 1922.9,1469.7 1927.9,1516.6 1933.5,1477.3 1938.4,1517.6 1943.2,1471.2 1948.6,1474.1 1953.8,1481.6 1959.4,1517.5 1964.7,1466.7 1970.0,1482.5 1976.5,1464.1 1982.3,1482.2 1987.2,1466.6 1993.7,1517.4 1998.2,1463.3 2004.6,1515.9 2009.0,1466.5 2015.2,1517.4 2020.1,1493.5 2026.0,1517.8 2031.8,1469.9 2037.5,1514.2 2042.4,1471.3 2047.4,1514.5 2053.2,1473.2 2058.8,1516.3 2063.7,1483.6 2069.1,1517.8 2075.4,1481.1 2081.9,1516.8 2086.4,1467.5 2091.7,1515.0 2098.2,1485.2 2103.5,1505.9 2109.5,1513.6 2114.6,1480.0 2120.7,1465.7 2126.2,1488.8 2132.0,1487.7 2136.9,1472.3 2141.4,1466.5 2147.8,1516.9 2154.2,1512.1 2160.3,1514.1 2165.5,1466.4 2170.3,1514.0 2175.4,1513.4 2180.3,1515.4 2186.5,1491.3 2191.7,1486.4 2198.1,1463.3 2204.3,1471.6 2208.8,1471.3 2214.9,1517.6 2219.9,1471.6 2224.8,1516.9 2229.8,1463.0 2236.3,1516.5 2240.7,1465.1 2247.2,1517.8 2252.2,1466.9 2258.6,1514.7 2264.6,1470.4 2270.4,1515.3 2275.6,1478.9 2281.6,1471.5 2287.2,1465.9 2293.6,1518.0 2298.2,1463.9 2304.1,1488.8 2309.9,1469.1 2316.2,1507.8 2321.2,1468.1 2327.2,1481.0 2332.0,1471.0 2337.1,1515.6 2342.6,1465.1 2348.4,1491.4 2354.6,1470.6 2359.1,1478.5 2365.7,1468.2 2370.9,1517.5 2375.9,1470.0 2380.5,1516.4 2385.4,1479.2 2390.3,1516.4 2395.2,1463.1 2401.1,1514.7 2405.9,1470.2 2410.5,1514.4 2416.1,1477.4 2422.0,1515.6 2427.1,1471.6 2432.7,1515.4 2439.0,1472.0 2443.9,1470.3 2450.2,1466.8 2455.5,1517.5 2460.3,1463.1 2466.1,1498.0 2471.3,1482.7 2476.9,1492.1 2483.0,1475.7 2489.5,1517.9 2494.0,1471.3 2500.4,1516.5 2505.2,1488.2 2511.4,1479.8 2516.7,1467.7 2521.4,1515.0 2527.8,1463.4 2533.8,1514.2 2538.5,1468.4 2544.3,1515.2 2549.9,1466.8 2555.3,1497.9 2560.8,1465.1 2566.9,1491.3 2571.6,1464.2 2576.2,1515.8 2580.6,1503.0 2586.8,1492.7 2592.0,1508.6 2598.6,1516.9 2603.4,1471.8 2609.9,1505.5 2616.4,1463.6 2622.4,1514.6 2627.4,1492.6 2633.8,1514.8" fill="none" stroke="#e0609a" stroke-width="1.8" stroke-linejoin="miter" stroke-miterlimit="3"/>
<polyline points="939.5,1478.2 942.3,1517.7 946.0,1463.0 948.7,1516.1 951.7,1467.2 955.0,1514.7 958.4,1464.4 961.3,1518.0 964.3,1466.6 967.1,1506.9 970.0,1465.8 973.3,1516.7 975.8,1497.7 978.9,1516.1 981.7,1463.4 984.3,1514.0 987.0,1464.1 990.3,1516.4 993.6,1512.1 996.5,1498.7 1000.2,1466.7 1003.1,1514.0 1006.3,1464.1 1009.5,1517.7 1012.4,1493.9 1015.4,1505.0 1018.0,1465.3 1020.8,1514.8 1024.0,1465.8 1026.7,1515.2 1029.4,1467.3 1032.8,1514.0 1036.4,1464.8 1039.5,1480.5 1042.1,1464.0 1045.6,1517.4 1048.5,1465.3 1052.0,1516.1 1055.4,1467.8 1059.1,1514.1 1062.0,1466.5 1065.5,1515.3 1068.5,1463.4 1071.8,1516.8 1075.6,1464.8 1079.1,1517.4 1082.6,1465.4 1085.4,1511.0 1088.1,1511.8 1091.2,1471.9 1094.6,1465.8 1098.1,1514.3 1101.1,1466.9 1104.8,1514.3 1108.6,1479.3 1111.3,1514.1 1114.9,1465.8 1118.2,1474.4 1121.8,1463.2 1124.9,1514.1 1127.8,1466.3 1130.8,1517.9 1134.4,1488.6 1137.5,1517.1 1141.0,1465.2 1144.6,1514.4 1147.4,1462.0 1151.0,1492.1 1154.1,1466.8 1157.3,1515.4 1160.2,1467.7 1163.1,1516.8 1165.8,1505.5 1169.2,1517.1 1172.2,1464.4 1175.9,1514.3 1178.5,1463.2 1182.2,1516.0 1185.9,1463.4 1189.2,1517.0 1192.6,1464.1 1195.3,1517.4 1198.8,1463.0 1202.4,1490.8 1206.1,1463.4 1209.0,1516.8 1211.8,1462.9 1214.8,1516.1 1217.7,1463.1 1221.2,1514.4 1223.9,1464.3 1227.5,1516.9 1230.3,1479.3 1233.4,1514.1 1236.9,1466.2 1240.3,1497.2 1243.4,1466.4 1246.5,1516.3 1249.6,1463.4 1253.3,1517.1 1256.9,1466.1 1260.1,1515.3 1262.8,1464.5 1266.2,1516.5 1269.3,1464.7 1272.4,1516.7 1275.2,1465.9 1278.3,1516.0 1280.9,1465.3 1284.4,1517.8 1287.1,1465.4 1290.6,1516.0 1294.2,1465.1 1298.0,1514.8 1301.1,1514.3 1304.1,1514.2 1307.1,1462.1 1310.2,1516.8 1313.1,1463.3 1316.9,1516.1 1320.5,1464.4 1323.2,1517.1 1326.6,1464.8 1329.4,1517.9 1332.8,1466.9 1336.0,1515.2 1338.7,1467.0 1342.3,1515.1 1345.2,1464.6 1347.8,1516.9 1350.7,1463.8 1353.8,1516.5 1356.8,1467.6 1359.4,1517.3 1363.0,1462.8 1366.4,1512.8 1369.8,1476.4 1372.6,1517.1 1375.4,1467.4 1378.2,1517.6 1381.7,1466.0 1385.3,1517.4 1388.7,1465.2 1391.9,1517.5 1394.8,1492.2 1397.4,1492.1 1400.6,1465.2 1403.2,1517.4 1406.4,1466.0 1409.5,1515.7 1412.1,1465.8 1414.7,1516.4 1418.5,1464.0 1421.7,1515.9 1424.3,1466.3 1427.3,1517.4 1430.5,1465.2 1433.3,1515.7 1436.6,1467.0 1440.2,1515.6 1443.1,1465.0 1446.5,1517.2 1449.4,1463.8 1452.8,1502.5 1456.5,1483.5 1459.1,1514.8 1462.4,1465.9 1466.1,1516.4 1469.5,1466.2 1472.9,1514.9 1476.1,1478.2 1478.7,1517.1 1482.1,1464.2 1485.7,1516.2 1488.6,1464.5 1491.7,1516.6 1494.3,1475.3 1497.9,1516.3 1501.1,1462.1 1504.4,1517.8 1507.6,1499.0 1510.4,1470.2 1513.8,1462.7 1516.5,1470.8 1520.0,1463.5 1522.8,1514.2 1526.3,1467.1 1528.9,1516.5 1532.1,1467.6 1535.9,1470.7 1539.3,1484.0 1542.8,1514.7 1545.9,1462.4 1549.2,1515.8 1552.0,1466.8 1555.4,1516.5 1558.4,1466.7 1562.0,1516.3 1564.6,1467.8 1568.2,1515.3 1572.0,1467.0 1575.0,1515.7 1578.0,1466.1 1581.8,1517.2 1584.3,1463.6 1587.6,1517.3 1590.2,1467.0 1593.9,1516.3 1597.6,1466.8 1601.3,1494.9 1604.9,1463.2 1608.6,1514.9 1612.1,1464.8 1614.9,1517.0 1618.1,1462.5 1621.6,1514.9 1625.3,1467.3 1628.5,1516.4 1631.3,1463.1 1634.3,1516.3 1637.6,1514.9 1640.6,1514.4 1644.2,1462.9 1647.2,1471.5 1651.0,1467.2 1654.3,1515.0 1657.4,1467.7 1661.0,1517.9 1663.6,1463.2 1666.3,1514.2 1669.9,1464.7 1673.7,1514.3 1676.7,1462.7 1679.6,1516.3 1683.4,1466.0 1686.6,1514.6 1690.4,1481.5 1693.4,1517.6 1697.0,1462.3 1700.5,1516.6 1703.1,1462.9 1706.9,1516.7 1710.2,1484.6 1713.1,1514.5 1715.9,1500.5 1718.4,1516.9 1721.0,1467.6 1724.8,1517.5 1727.5,1511.8 1731.2,1516.5 1734.2,1466.9 1737.5,1514.6 1740.2,1466.3 1742.9,1517.5 1746.0,1462.9 1749.6,1515.3 1752.8,1463.9 1755.5,1510.3 1758.9,1463.3 1761.9,1515.0 1764.9,1467.9 1768.6,1514.4 1772.4,1462.3 1775.3,1506.3 1778.3,1507.5 1781.5,1514.7 1785.2,1463.3 1788.0,1514.7 1791.5,1473.9 1794.8,1516.0 1797.6,1465.7 1801.2,1516.3 1803.9,1466.4 1807.3,1514.2 1810.3,1467.1 1813.5,1514.1 1816.7,1467.2 1819.5,1517.3 1822.3,1464.2 1824.8,1516.1 1828.0,1462.7 1831.7,1517.5 1835.1,1464.3 1837.8,1517.5 1841.0,1465.1 1844.2,1514.1 1847.0,1481.3 1850.7,1501.5 1853.5,1462.1 1856.8,1516.1 1859.5,1467.2 1862.1,1514.5 1865.3,1488.3 1868.0,1516.4 1870.8,1465.4 1873.5,1517.3 1876.6,1464.5 1879.8,1515.6 1883.4,1464.0 1886.4,1515.7 1889.9,1467.5 1893.6,1514.2 1897.4,1467.6 1900.5,1516.5 1903.7,1462.4 1906.9,1513.6 1910.5,1467.6 1914.1,1517.5 1916.7,1465.8 1920.1,1515.1 1923.9,1465.7 1927.1,1515.7 1930.0,1463.8 1932.7,1516.4 1935.9,1463.6 1939.2,1475.9 1942.1,1464.4 1945.0,1514.4 1948.6,1465.7 1952.0,1514.8 1955.2,1465.3 1958.3,1515.2 1961.2,1465.1 1964.5,1514.0 1968.1,1463.4 1971.3,1515.1 1974.3,1466.6 1976.9,1517.5 1979.6,1464.3 1983.1,1514.4 1986.8,1466.4 1989.8,1515.4 1993.2,1467.1 1996.4,1517.0 1999.9,1464.9 2003.4,1509.2 2006.0,1466.6 2009.2,1517.9 2012.3,1466.7 2015.6,1515.5 2018.7,1466.3 2021.8,1516.2 2024.8,1466.7 2028.0,1515.8 2030.9,1462.9 2034.2,1514.4 2037.2,1467.1 2041.0,1514.8 2044.7,1495.4 2047.9,1517.7 2051.2,1468.0 2054.4,1516.7 2057.4,1465.6 2061.2,1516.7 2063.9,1464.2 2067.1,1516.3 2070.9,1464.9 2074.3,1518.0 2077.5,1466.9 2080.5,1517.9 2083.7,1462.7 2087.2,1517.3 2090.9,1464.5 2093.8,1516.0 2096.6,1463.1 2099.9,1515.4 2103.3,1462.3 2106.9,1515.2 2109.4,1463.8 2112.7,1516.7 2115.9,1465.3 2119.3,1516.1 2122.6,1477.1 2126.2,1477.7 2129.4,1466.9 2133.0,1504.7 2135.9,1466.3 2138.7,1510.7 2142.0,1464.1 2145.1,1514.2 2148.4,1467.8 2151.7,1511.9 2155.4,1463.9 2159.0,1515.2 2162.8,1465.0 2165.7,1515.6 2168.5,1463.9 2171.7,1517.2 2174.5,1464.2 2178.3,1515.2 2181.0,1465.2 2184.1,1507.2 2187.1,1463.5 2190.0,1499.9 2193.0,1462.9 2195.7,1515.1 2198.4,1464.7 2202.0,1514.6 2205.5,1464.3 2208.3,1517.8 2211.1,1501.8 2214.0,1517.6 2217.1,1463.5 2219.9,1493.1 2223.2,1463.6 2226.2,1516.6 2229.2,1478.0 2232.8,1515.3 2235.5,1465.4 2238.7,1484.0 2241.6,1462.8 2244.5,1515.6 2248.0,1467.3 2250.8,1500.6 2254.2,1464.1 2257.6,1516.8 2261.2,1464.1 2264.0,1514.5 2267.5,1471.8 2270.3,1514.8 2273.3,1462.2 2276.7,1514.7 2280.0,1466.3 2283.1,1516.7 2285.7,1467.0 2288.6,1514.2 2291.9,1462.3 2294.6,1517.2 2298.4,1501.3 2301.4,1517.0 2304.4,1462.5 2307.5,1517.7 2311.0,1467.0 2314.1,1514.2 2317.2,1465.1 2319.9,1501.6 2323.5,1463.6 2327.3,1516.6 2330.2,1462.4 2333.3,1514.8 2336.0,1466.2 2338.9,1515.0 2342.0,1467.6 2345.0,1495.3 2347.9,1466.9 2351.5,1514.7 2354.8,1464.8 2358.4,1514.5 2361.5,1482.6 2364.3,1516.8 2367.0,1463.9 2370.0,1470.5 2373.8,1502.3 2377.6,1492.0 2380.8,1463.1 2383.3,1517.7 2386.7,1467.6 2389.6,1471.2 2393.1,1467.0 2395.9,1516.6 2399.7,1463.0 2403.3,1517.0 2406.1,1467.0 2409.1,1516.2 2412.7,1495.5 2416.1,1517.3 2419.8,1467.7 2423.0,1514.6 2426.3,1462.5 2429.1,1515.8 2431.8,1462.2 2434.6,1507.8 2438.2,1466.7 2441.2,1516.6 2444.3,1464.0 2447.7,1517.3 2450.4,1463.8 2453.7,1515.4 2456.4,1463.9 2460.2,1517.6 2464.0,1467.8 2467.6,1514.2 2470.9,1463.8 2474.7,1515.9 2477.7,1464.1 2480.3,1514.8 2483.4,1462.5 2486.4,1516.3 2489.7,1465.4 2492.4,1514.7 2495.6,1462.7 2498.5,1514.4 2501.4,1464.9 2504.2,1493.1 2507.6,1462.5 2510.2,1515.8 2513.5,1466.3 2516.2,1518.0 2518.9,1467.0 2521.7,1517.8 2525.2,1462.8 2527.8,1514.9 2530.4,1465.6 2533.4,1516.8 2537.1,1465.7 2540.3,1517.7 2543.1,1466.5 2546.7,1516.7 2549.4,1464.2 2553.1,1497.2 2555.8,1465.3 2558.5,1517.7 2561.4,1463.2 2565.1,1470.9 2567.8,1466.8 2571.0,1515.2 2574.1,1462.9 2577.3,1516.8 2581.1,1462.1 2583.8,1516.0 2587.4,1462.2 2591.0,1516.7 2594.2,1462.9 2597.3,1517.5 2599.9,1464.0 2603.6,1477.6 2606.7,1464.8 2609.7,1496.1 2612.7,1462.1 2616.5,1500.2 2619.4,1463.6 2622.3,1516.3 2626.1,1495.2 2629.7,1517.5 2633.0,1465.8" fill="none" stroke="#5a98c0" stroke-width="2.0" stroke-linejoin="miter" stroke-miterlimit="3"/>
<polyline points="938.0,1472.0 941.4,1516.7 944.5,1471.4 947.5,1515.4 950.2,1464.6 952.9,1518.0 955.6,1466.4 958.3,1509.2 961.1,1468.5 963.7,1514.7 966.3,1467.1 969.2,1517.7 972.6,1469.8 975.0,1516.3 977.7,1471.7 981.0,1514.3 984.3,1466.8 986.6,1514.7 989.7,1466.2 992.2,1516.4 995.2,1466.0 998.6,1516.4 1001.8,1472.8 1004.2,1514.8 1007.5,1470.4 1010.0,1515.3 1013.1,1468.1 1015.7,1514.2 1018.1,1470.3 1020.9,1516.4 1023.7,1464.1 1026.6,1518.0 1029.6,1471.2 1032.0,1514.6 1035.1,1464.9 1037.9,1516.2 1040.8,1470.6 1043.5,1517.0 1046.6,1471.6 1049.2,1517.1 1052.0,1466.8 1055.4,1491.4 1058.4,1471.7 1061.8,1514.9 1064.2,1464.3 1066.5,1516.0 1069.0,1473.4 1071.5,1514.7 1074.8,1505.0 1077.3,1517.9 1080.3,1467.4 1083.2,1515.3 1085.6,1471.3 1088.6,1515.6 1090.9,1469.6 1094.2,1517.8 1096.8,1466.5 1099.6,1514.9 1102.7,1470.4 1106.1,1514.9 1108.6,1472.6 1111.2,1517.0 1113.8,1467.3 1117.1,1514.6 1120.0,1468.5 1123.3,1514.8 1126.0,1471.8 1128.5,1517.5 1131.1,1464.2 1134.5,1514.0 1136.9,1471.4 1139.4,1516.7 1142.1,1473.2 1145.4,1480.6 1148.6,1492.7 1151.1,1515.7 1153.4,1473.9 1156.7,1514.5 1159.1,1468.3 1162.2,1514.6 1165.0,1465.1 1167.9,1517.7 1170.4,1473.7 1173.5,1515.1 1176.1,1492.9 1178.8,1516.2 1181.1,1470.9 1184.0,1516.2 1187.4,1472.7 1190.2,1515.3 1193.6,1467.9 1196.3,1514.6 1198.6,1470.1 1201.2,1516.4 1203.7,1466.0 1207.0,1517.1 1209.3,1470.9 1212.3,1516.2 1215.7,1464.0 1219.0,1516.0 1222.4,1466.3 1225.5,1515.5 1228.2,1469.3 1231.3,1515.3 1234.2,1466.2 1236.8,1517.6 1239.9,1469.2 1242.4,1514.6 1245.3,1469.2 1248.5,1515.0 1251.7,1468.6 1254.9,1517.6 1257.2,1467.8 1260.5,1514.5 1263.0,1465.0 1266.2,1516.1 1268.6,1468.0 1271.7,1515.8 1274.9,1471.6 1277.9,1515.5 1280.5,1467.7 1283.2,1514.1 1286.1,1464.6 1289.2,1515.1 1291.8,1472.3 1294.8,1517.4 1297.5,1471.9 1300.2,1514.2 1302.9,1471.1 1305.7,1516.6 1308.4,1467.9 1311.7,1514.8 1314.8,1467.7 1317.4,1514.3 1320.2,1469.3 1323.5,1496.7 1326.3,1468.6 1329.0,1515.9 1331.8,1468.9 1335.0,1516.7 1337.8,1464.4 1340.7,1517.1 1343.1,1466.2 1346.3,1514.4 1349.4,1469.6 1352.5,1516.8 1354.8,1470.9 1357.8,1518.0 1361.1,1465.5 1363.9,1514.0 1366.5,1466.6 1369.1,1517.4 1372.0,1468.2 1374.6,1517.5 1377.8,1466.6 1380.2,1516.1 1383.0,1468.9 1385.7,1517.2 1389.0,1469.6 1391.7,1516.1 1394.6,1467.2 1397.8,1515.2 1401.0,1469.9 1404.3,1515.8 1406.7,1468.3 1409.0,1517.5 1412.0,1465.8 1414.9,1517.2 1417.9,1470.7 1420.4,1517.4 1423.8,1466.1 1426.2,1517.1 1428.9,1470.6 1432.2,1516.7 1434.6,1507.6 1437.2,1514.9 1439.8,1469.6 1443.1,1515.3 1445.6,1472.0 1448.3,1514.1 1451.3,1466.2 1453.7,1515.9 1456.5,1470.8 1459.7,1514.5 1463.1,1473.4 1465.7,1515.4 1468.6,1473.3 1471.4,1517.5 1474.3,1464.9 1476.9,1517.6 1479.4,1496.9 1482.8,1515.4 1485.9,1464.5 1488.6,1515.0 1491.1,1471.9 1493.5,1516.2 1496.4,1471.9 1499.2,1514.1 1501.6,1470.5 1504.5,1515.4 1507.6,1465.6 1510.9,1515.3 1514.2,1468.8 1516.6,1517.5 1519.4,1469.4 1522.2,1514.7 1525.1,1467.7 1527.8,1514.8 1530.4,1472.7 1533.7,1514.1 1536.5,1471.9 1539.6,1514.9 1542.0,1487.7 1544.9,1515.2 1547.3,1469.8 1550.3,1517.1 1552.6,1466.5 1556.0,1514.2 1559.1,1472.1 1562.3,1515.8 1564.6,1473.4 1567.3,1514.4 1570.4,1470.8 1573.1,1514.6 1575.6,1467.3 1579.1,1517.2 1581.9,1471.8 1585.0,1516.5 1588.0,1472.5 1590.4,1516.9 1592.9,1473.7 1596.0,1514.5 1599.4,1473.0 1602.6,1517.2 1605.4,1472.3 1608.6,1515.2 1611.5,1473.5 1614.9,1517.1 1618.1,1466.3 1620.9,1514.9 1624.3,1470.9 1627.0,1517.1 1630.0,1473.4 1632.8,1514.3 1636.0,1467.4 1639.3,1492.0 1641.6,1465.1 1644.3,1516.4 1647.0,1466.1 1650.2,1516.5 1652.6,1466.7 1655.4,1516.6 1657.8,1507.0 1660.3,1515.1 1663.0,1466.2 1666.0,1517.6 1668.8,1473.6 1672.2,1514.8 1674.7,1477.9 1678.0,1515.8 1680.6,1467.5 1683.5,1517.4 1686.2,1473.3 1689.3,1514.3 1692.0,1473.6 1695.1,1516.5 1698.0,1470.8 1700.8,1515.5 1703.1,1472.3 1706.1,1515.8 1709.4,1471.3 1711.7,1515.3 1715.0,1472.9 1718.0,1487.6 1721.1,1470.4 1724.3,1515.2 1727.0,1473.8 1730.2,1516.7 1733.6,1471.1 1736.2,1514.6 1739.4,1471.9 1741.9,1516.1 1744.3,1471.4 1747.0,1514.2 1749.7,1473.7 1752.2,1515.2 1754.7,1467.2 1757.1,1515.0 1759.8,1473.6 1762.3,1517.6 1765.6,1470.4 1768.2,1514.6 1771.0,1469.6 1774.1,1515.1 1777.5,1469.3 1780.5,1515.0 1782.8,1472.3 1785.5,1517.8 1788.0,1464.7 1791.2,1516.7 1794.4,1465.1 1797.4,1517.9 1800.5,1471.7 1803.8,1517.0 1806.5,1472.1 1809.0,1517.5 1811.9,1470.7 1814.3,1515.4 1817.1,1469.0 1820.1,1516.3 1823.1,1466.7 1826.2,1517.4 1829.3,1471.5 1832.6,1517.6 1835.8,1470.5 1838.2,1516.8 1841.2,1466.8 1844.2,1517.3 1846.7,1466.2 1849.8,1517.9 1852.4,1471.0 1855.7,1498.3 1858.1,1466.8 1860.9,1516.2 1863.2,1472.3 1865.8,1516.5 1868.4,1469.7 1871.6,1514.8 1874.8,1505.0 1877.1,1516.0 1879.5,1470.3 1882.4,1515.6 1885.4,1466.3 1888.8,1517.2 1891.4,1473.9 1894.3,1514.5 1897.3,1471.1 1900.0,1514.8 1902.6,1465.9 1905.5,1515.8 1908.6,1466.0 1911.5,1516.8 1914.6,1473.5 1917.7,1516.9 1920.2,1464.1 1923.3,1516.5 1926.0,1465.6 1929.4,1477.9 1932.1,1473.0 1934.9,1514.4 1937.4,1471.8 1940.8,1517.6 1943.6,1472.2 1946.0,1516.3 1948.5,1510.9 1951.6,1517.8 1954.4,1471.3 1957.6,1517.4 1959.9,1466.1 1962.6,1514.0 1965.8,1510.0 1968.7,1514.3 1971.7,1472.9 1974.7,1514.8 1978.0,1467.8 1980.9,1514.5 1983.7,1469.9 1986.8,1515.8 1989.9,1464.5 1992.7,1516.7 1995.2,1470.5 1998.0,1514.6 2001.0,1464.6 2004.4,1514.9 2007.6,1472.2 2010.7,1514.2 2014.1,1472.2 2016.6,1517.7 2019.7,1473.3 2023.0,1515.1 2025.3,1471.6 2028.7,1516.8 2031.9,1465.6 2034.3,1517.1 2037.6,1464.0 2040.6,1517.3 2043.5,1469.9 2045.9,1514.2 2048.5,1503.5 2050.8,1517.3 2053.6,1465.2 2056.1,1515.7 2059.5,1469.5 2061.9,1516.9 2065.2,1465.0 2067.8,1517.0 2070.8,1473.8 2073.1,1514.3 2076.1,1470.0 2078.9,1515.6 2081.9,1473.2 2085.1,1517.7 2088.2,1464.3 2091.5,1515.7 2094.0,1473.4 2097.0,1515.0 2099.7,1467.2 2102.5,1517.9 2105.9,1471.6 2109.3,1517.0 2111.8,1480.4 2115.1,1517.7 2118.3,1471.7 2121.5,1516.1 2124.7,1467.1 2127.4,1516.1 2129.8,1469.3 2132.7,1517.8 2136.1,1470.9 2138.4,1514.8 2141.8,1464.1 2144.9,1518.0 2147.6,1470.9 2150.8,1517.0 2153.3,1464.3 2155.9,1515.0 2158.9,1469.9 2161.8,1516.8 2164.2,1486.3 2166.6,1514.5 2170.0,1470.9 2173.2,1514.7 2175.8,1468.1 2178.6,1516.9 2181.9,1467.4 2184.2,1517.3 2187.5,1472.0 2190.1,1514.0 2193.4,1465.6 2196.4,1516.6 2198.8,1465.0 2201.5,1516.6 2204.0,1508.4 2206.5,1517.9 2209.6,1465.4 2212.1,1515.5 2214.6,1466.5 2217.2,1515.5 2219.7,1465.9 2222.4,1515.5 2225.2,1472.7 2228.3,1517.3 2230.6,1468.4 2233.4,1516.8 2235.8,1468.8 2238.3,1515.8 2240.7,1467.6 2244.0,1516.2 2246.6,1471.4 2249.9,1517.8 2252.3,1473.4 2254.8,1514.7 2257.3,1464.8 2260.7,1515.8 2263.0,1468.5 2265.5,1516.7 2268.0,1473.8 2270.4,1514.0 2273.3,1464.2 2276.4,1516.1 2279.3,1470.0 2281.7,1517.2 2284.9,1472.6 2288.2,1514.7 2291.1,1473.0 2293.7,1514.1 2296.1,1465.9 2299.0,1517.8 2302.1,1464.1 2304.6,1515.9 2308.0,1468.9 2311.0,1514.9 2313.5,1474.0 2316.0,1517.8 2318.8,1467.4 2321.1,1515.5 2324.3,1464.0 2326.9,1515.8 2330.0,1465.4 2332.4,1517.8 2334.8,1469.2 2338.1,1514.2 2340.6,1469.9 2343.3,1517.6 2346.6,1473.6 2350.0,1515.6 2353.3,1483.0 2355.9,1517.9 2358.6,1469.3 2361.8,1516.6 2364.3,1466.4 2367.2,1517.2 2370.6,1465.9 2373.9,1516.3 2377.0,1466.6 2379.7,1516.1 2382.0,1471.4 2384.8,1516.7 2387.1,1468.8 2390.2,1516.6 2393.6,1471.9 2396.4,1517.8 2399.1,1473.6 2401.6,1516.9 2404.7,1471.7 2407.2,1514.9 2409.5,1465.4 2412.3,1514.3 2415.7,1469.8 2418.7,1515.7 2421.6,1464.2 2424.0,1515.5 2427.2,1472.4 2430.2,1516.8 2432.7,1471.7 2435.3,1517.3 2438.5,1472.8 2441.0,1514.1 2444.1,1466.7 2446.4,1514.7 2448.7,1466.3 2451.8,1475.1 2455.1,1473.7 2457.8,1516.1 2460.5,1468.8 2462.9,1514.3 2465.3,1470.2 2467.9,1517.2 2470.5,1468.9 2473.9,1516.2 2476.3,1470.9 2479.4,1514.9 2482.6,1464.9 2485.1,1516.8 2488.3,1466.3 2491.3,1516.3 2493.8,1469.8 2496.8,1515.0 2499.6,1469.3 2501.9,1516.9 2504.5,1470.4 2507.5,1517.6 2510.1,1470.6 2512.6,1514.9 2515.8,1471.2 2519.0,1515.2 2522.1,1464.6 2524.5,1514.2 2526.9,1473.3 2529.7,1514.8 2532.6,1469.2 2535.7,1516.1 2538.1,1464.7 2540.9,1515.0 2543.5,1467.2 2546.6,1517.1 2549.3,1473.3 2552.3,1514.4 2555.3,1514.2 2558.7,1514.5 2561.6,1467.0 2564.8,1517.1 2567.2,1467.9 2570.5,1514.2 2573.7,1465.4 2576.0,1514.7 2579.3,1465.7 2582.4,1515.7 2584.8,1466.4 2587.3,1515.0 2590.6,1473.0 2593.9,1516.4 2596.7,1471.2 2599.2,1514.8 2601.6,1472.1 2604.1,1515.0 2607.5,1465.5 2610.2,1514.7 2612.9,1465.9 2616.1,1517.5 2618.4,1471.6 2621.7,1517.8 2624.9,1472.2 2627.6,1515.5 2630.3,1465.1 2633.6,1515.6" fill="none" stroke="#6aaa5c" stroke-width="2.4" stroke-linejoin="miter" stroke-miterlimit="3"/>
<line x1="938" y1="1490" x2="2632" y2="1490" stroke="#e0609a" stroke-width="2.6"/>
<rect x="2632" y="1474" width="12" height="36" rx="2" fill="#222"/>
<line x1="2640" y1="1459" x2="2640" y2="1544" stroke="#111" stroke-width="2.5"/>
<rect x="2636" y="1526" width="2.5" height="12" fill="#999"/><rect x="2642" y="1526" width="2.5" height="12" fill="#999"/>
<line x1="936" y1="1548" x2="2643" y2="1548" stroke="#1a1a1a" stroke-width="2.5"/>
<line x1="937" y1="1547" x2="937" y2="1556" stroke="#1a1a1a" stroke-width="2.5"/><line x1="2642" y1="1547" x2="2642" y2="1556" stroke="#1a1a1a" stroke-width="2.5"/>
<line x1="1088" y1="1547" x2="1088" y2="1556" stroke="#1a1a1a" stroke-width="2.5"/>
<text x="1088" y="1576" font-size="20" font-weight="normal" fill="#222" text-anchor="middle" textLength="31.5" lengthAdjust="spacingAndGlyphs"  stroke="#222" stroke-width="0.2">Sep</text>
<line x1="1366" y1="1547" x2="1366" y2="1556" stroke="#1a1a1a" stroke-width="2.5"/>
<text x="1366" y="1576" font-size="20" font-weight="normal" fill="#222" text-anchor="middle" textLength="31" lengthAdjust="spacingAndGlyphs"  stroke="#222" stroke-width="0.2">Oct</text>
<line x1="1654" y1="1547" x2="1654" y2="1556" stroke="#1a1a1a" stroke-width="2.5"/>
<text x="1654" y="1576" font-size="20" font-weight="normal" fill="#222" text-anchor="middle" textLength="33" lengthAdjust="spacingAndGlyphs"  stroke="#222" stroke-width="0.2">Nov</text>
<line x1="1932" y1="1547" x2="1932" y2="1556" stroke="#1a1a1a" stroke-width="2.5"/>
<text x="1932" y="1576" font-size="20" font-weight="normal" fill="#222" text-anchor="middle" textLength="33" lengthAdjust="spacingAndGlyphs"  stroke="#222" stroke-width="0.2">Dec</text>
<line x1="2220" y1="1547" x2="2220" y2="1556" stroke="#1a1a1a" stroke-width="2.5"/>
<text x="2220" y="1576" font-size="20" font-weight="normal" fill="#222" text-anchor="middle" textLength="45" lengthAdjust="spacingAndGlyphs"  stroke="#222" stroke-width="0.2">2022</text>
<line x1="2507" y1="1547" x2="2507" y2="1556" stroke="#1a1a1a" stroke-width="2.5"/>
<text x="2507" y="1576" font-size="20" font-weight="normal" fill="#222" text-anchor="middle" textLength="30.5" lengthAdjust="spacingAndGlyphs"  stroke="#222" stroke-width="0.2">Feb</text>
<rect x="938" y="1597.5" width="486" height="45" rx="6" fill="#fff" stroke="#dcdcdc" stroke-width="2"/>
<rect x="1218" y="1598.5" width="69" height="43" fill="#eef4fa"/>
<rect x="1002" y="1598" width="2" height="44" fill="#dcdcdc"/>
<rect x="1074" y="1598" width="2" height="44" fill="#dcdcdc"/>
<rect x="1145.7" y="1598" width="2" height="44" fill="#dcdcdc"/>
<rect x="1216" y="1598" width="2" height="44" fill="#dcdcdc"/>
<rect x="1286" y="1598" width="2" height="44" fill="#dcdcdc"/>
<rect x="1348" y="1598" width="2" height="44" fill="#dcdcdc"/>
<text x="970.5" y="1630.5" font-size="25" font-weight="normal" fill="#222" text-anchor="middle" textLength="32" lengthAdjust="spacingAndGlyphs"  stroke="#222" stroke-width="0.4">1D</text>
<text x="1039.0" y="1630.5" font-size="25" font-weight="normal" fill="#222" text-anchor="middle" textLength="38" lengthAdjust="spacingAndGlyphs"  stroke="#222" stroke-width="0.4">1W</text>
<text x="1110.85" y="1630.5" font-size="25" font-weight="normal" fill="#222" text-anchor="middle" textLength="35" lengthAdjust="spacingAndGlyphs"  stroke="#222" stroke-width="0.4">1M</text>
<text x="1181.85" y="1630.5" font-size="25" font-weight="normal" fill="#222" text-anchor="middle" textLength="35" lengthAdjust="spacingAndGlyphs"  stroke="#222" stroke-width="0.4">3M</text>
<text x="1252.0" y="1630.5" font-size="25" font-weight="normal" fill="#0c5cc0" text-anchor="middle" textLength="35" lengthAdjust="spacingAndGlyphs"  stroke="#0c5cc0" stroke-width="0.4">6M</text>
<text x="1318.0" y="1630.5" font-size="25" font-weight="normal" fill="#222" text-anchor="middle" textLength="28" lengthAdjust="spacingAndGlyphs"  stroke="#222" stroke-width="0.4">1Y</text>
<text x="1387.0" y="1630.5" font-size="25" font-weight="normal" fill="#222" text-anchor="middle" textLength="41" lengthAdjust="spacingAndGlyphs"  stroke="#222" stroke-width="0.4">ALL</text>
<rect x="1460" y="1597.5" width="205" height="45" rx="6" fill="#fff" stroke="#dcdcdc" stroke-width="2"/>
<rect x="1618" y="1598" width="2" height="44" fill="#dcdcdc"/>
<text x="1476" y="1630.5" font-size="25" font-weight="normal" fill="#222" text-anchor="start" textLength="99" lengthAdjust="spacingAndGlyphs"  stroke="#222" stroke-width="0.4">CUSTOM</text>
<polygon points="1591,1622.5 1605,1622.5 1598,1615.5" fill="#999"/>
<rect x="1631" y="1611" width="21" height="19" rx="1.5" fill="none" stroke="#444" stroke-width="2.2"/><g fill="#444"><rect x="1640.5" y="1614" width="2" height="2"/><rect x="1640.5" y="1625" width="2" height="2"/><rect x="1634" y="1619.5" width="2" height="2"/><rect x="1647" y="1619.5" width="2" height="2"/></g>
</svg>
</body></html>
